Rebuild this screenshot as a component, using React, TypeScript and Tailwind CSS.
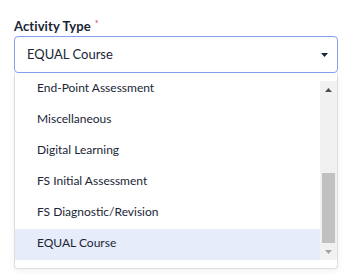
import { useState } from 'react';

const options = [
  'End-Point Assessment',
  'Miscellaneous',
  'Digital Learning',
  'FS Initial Assessment',
  'FS Diagnostic/Revision',
  'EQUAL Course',
];

function Caret({ up, className }: { up?: boolean; className?: string }) {
  return (
    <svg width="7" height="4" viewBox="0 0 7 4" className={className}>
      {up ? <path d="M0 4 L3.5 0 L7 4 Z" fill="currentColor" /> : <path d="M0 0 L7 0 L3.5 4 Z" fill="currentColor" />}
    </svg>
  );
}

export default function App() {
  const [selected] = useState('EQUAL Course');

  return (
    <div className="min-h-screen bg-white pl-[14px] pt-4 font-['Lato','Open_Sans',sans-serif] text-[#1a2636]">
      {/* Label */}
      <div className="flex h-5 items-start">
        <span className="text-[13px] font-bold leading-5 tracking-[0.1px]">Activity Type</span>
        <span className="ml-[4px] mt-[3px] text-[9px] leading-none text-[#d6336c]">*</span>
      </div>

      {/* Select */}
      <div className="w-[324px]">
        <div className="flex h-[37px] items-center justify-between rounded-[4px] border border-[#86a0f0] pl-3 pr-[9px]">
          <span className="text-[13px]">{selected}</span>
          <Caret className="text-[#1a2636]" />
        </div>

        {/* Dropdown list, scrolled to the bottom */}
        <div className="rounded-b-[4px] border-x border-b border-[#dedede] bg-white py-2 shadow-[0_2px_6px_rgba(0,0,0,0.06)]">
          <div className="flex h-[179px]">
            <div className="flex flex-1 flex-col">
              {options.map((o, i) => (
                <div
                  key={o}
                  className={`flex shrink-0 items-center pl-[22px] text-[12px] ${i === 0 ? 'h-[24px] pb-[10px]' : 'h-[31px] pb-[3px]'} ${o === selected ? 'bg-[#e6ecf9]' : ''}`}
                >
                  {o}
                </div>
              ))}
            </div>

            {/* Scrollbar */}
            <div className="flex w-[17px] flex-col bg-[#f1f1f1]">
              <div className="flex h-[17px] items-center justify-center text-[#505050]">
                <Caret up />
              </div>
              <div className="flex flex-1 flex-col justify-end px-[2px]">
                <div className="h-[70px] bg-[#c1c1c1]" />
              </div>
              <div className="flex h-[17px] items-center justify-center text-[#a3a3a3]">
                <Caret />
              </div>
            </div>
          </div>
        </div>
      </div>
    </div>
  );
}
